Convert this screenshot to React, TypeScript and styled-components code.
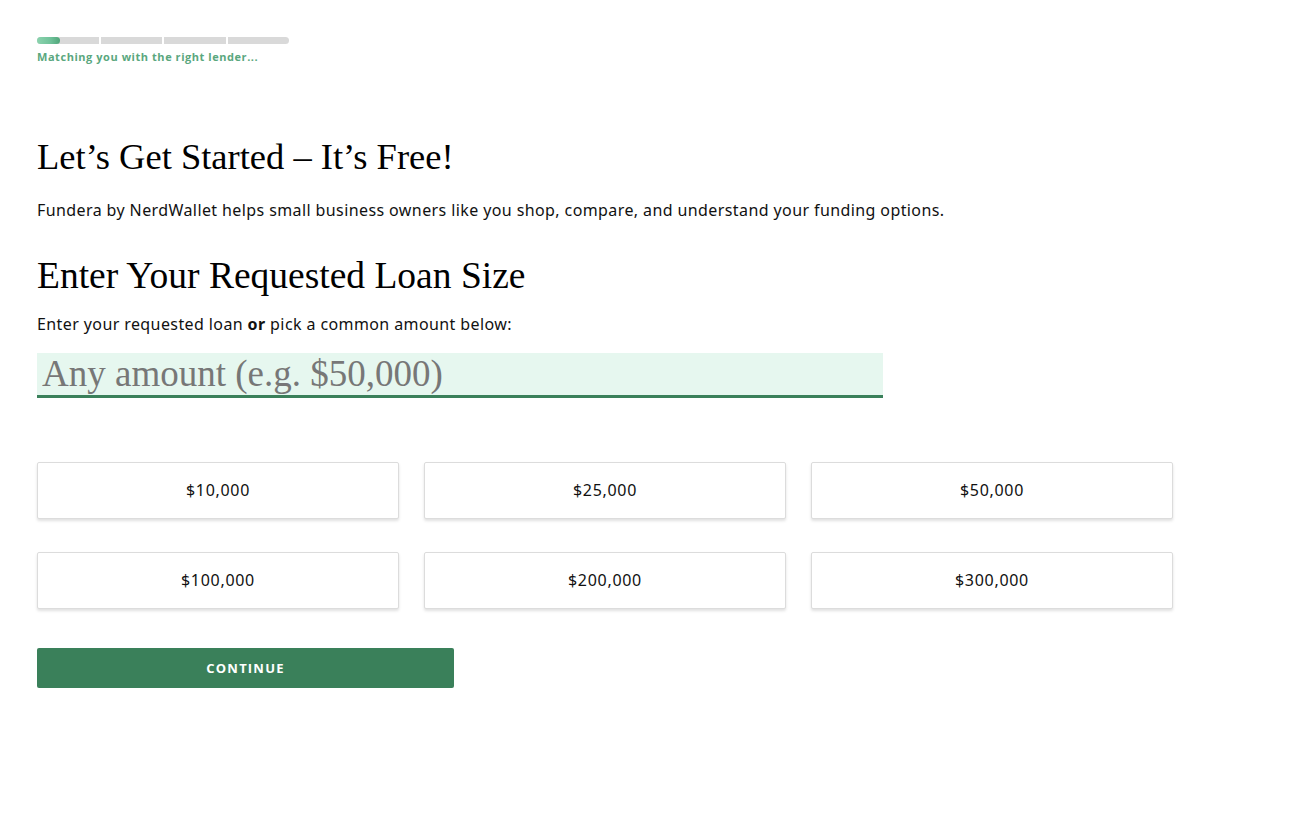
import React from "react";
import styled, { createGlobalStyle } from "styled-components";

const Global = createGlobalStyle`
  html, body { margin: 0; padding: 0; background: #ffffff; }
  body { font-family: "Noto Sans", "Liberation Sans", sans-serif; color: #111; }
  * { box-sizing: border-box; }
`;

const Page = styled.div`
  padding: 37px 0 0 37px;
  width: 1304px;
`;

const Progress = styled.div`
  display: flex;
  flex-direction: column;
  gap: 6px;
  width: 252px;
`;

const Track = styled.div`
  position: relative;
  display: grid;
  grid-template-columns: repeat(4, 1fr);
  gap: 2px;
  height: 7px;
`;

const Segment = styled.div<{ $first?: boolean; $last?: boolean }>`
  background: #d9d9d9;
  border-radius: ${(p) => (p.$first ? "4px 0 0 4px" : p.$last ? "0 4px 4px 0" : "0")};
`;

const Fill = styled.div`
  position: absolute;
  left: 0;
  top: 0;
  height: 7px;
  border-radius: 4px;
  background: linear-gradient(90deg, #8bd3ae 0%, #6fc199 60%, #4fa67a 100%);
`;

const ProgressLabel = styled.div`
  font-family: "Open Sans", "Noto Sans", sans-serif;
  font-weight: 700;
  font-size: 11px;
  line-height: 14px;
  letter-spacing: 0.55px;
  color: #5aa77e;
`;

const Heading = styled.h1<{ $size: number }>`
  font-family: "Liberation Serif", "Times New Roman", serif;
  font-weight: 400;
  font-size: ${(p) => p.$size}px;
  line-height: 1.2;
  margin: 0;
  color: #000;
`;

const Lead = styled.p`
  font-size: 16px;
  line-height: 24px;
  letter-spacing: 0.4px;
  margin: 0;
  color: #111;
`;

const Section = styled.section`
  display: flex;
  flex-direction: column;
`;

const AmountInput = styled.input`
  width: 846px;
  height: 45px;
  border: none;
  border-bottom: 3px solid #3a805a;
  background: #e6f7ef;
  padding: 0 0 0 5px;
  font-family: "Liberation Serif", "Times New Roman", serif;
  font-size: 37px;
  color: #222;
  outline: none;
  caret-color: #222;
  &::placeholder { color: #777; }
`;

const Grid = styled.div`
  display: grid;
  grid-template-columns: repeat(3, 362px);
  column-gap: 25px;
  row-gap: 33px;
`;

const Choice = styled.button`
  height: 57px;
  background: #fff;
  border: 1px solid #dcdcdc;
  border-radius: 2px;
  box-shadow: 0 2px 3px rgba(0, 0, 0, 0.12);
  font-family: "Noto Sans", sans-serif;
  font-size: 16px;
  letter-spacing: 0.7px;
  color: #111;
  cursor: pointer;
`;

const Continue = styled.button`
  width: 417px;
  height: 40px;
  background: #3a805a;
  border: none;
  border-radius: 2px;
  color: #fff;
  font-family: "Open Sans", "Noto Sans", sans-serif;
  font-weight: 700;
  font-size: 13px;
  letter-spacing: 1.2px;
  cursor: pointer;
`;

const amounts = ["$10,000", "$25,000", "$50,000", "$100,000", "$200,000", "$300,000"];

export default function App() {
  return (
    <Page>
      <Global />
      <Progress>
        <Track>
          <Segment $first />
          <Segment />
          <Segment />
          <Segment $last />
          <Fill style={{ width: 23 }} />
        </Track>
        <ProgressLabel>Matching you with the right lender...</ProgressLabel>
      </Progress>
      <Section style={{ marginTop: 71 }}>
        <Heading $size={36.5}>Let’s Get Started – It’s Free!</Heading>
        <Lead style={{ marginTop: 19 }}>
          Fundera by NerdWallet helps small business owners like you shop, compare, and understand your funding options.
        </Lead>
        <Heading as="h2" $size={37.5} style={{ marginTop: 31 }}>
          Enter Your Requested Loan Size
        </Heading>
        <Lead style={{ marginTop: 14 }}>
          Enter your requested loan <b>or</b> pick a common amount below:
        </Lead>
        <div style={{ marginTop: 17 }}>
          <AmountInput placeholder="Any amount (e.g. $50,000)" />
        </div>
        <div style={{ marginTop: 64 }}>
          <Grid>
            {amounts.map((a) => (
              <Choice key={a}>{a}</Choice>
            ))}
          </Grid>
        </div>
        <div style={{ marginTop: 39 }}>
          <Continue>CONTINUE</Continue>
        </div>
      </Section>
    </Page>
  );
}
